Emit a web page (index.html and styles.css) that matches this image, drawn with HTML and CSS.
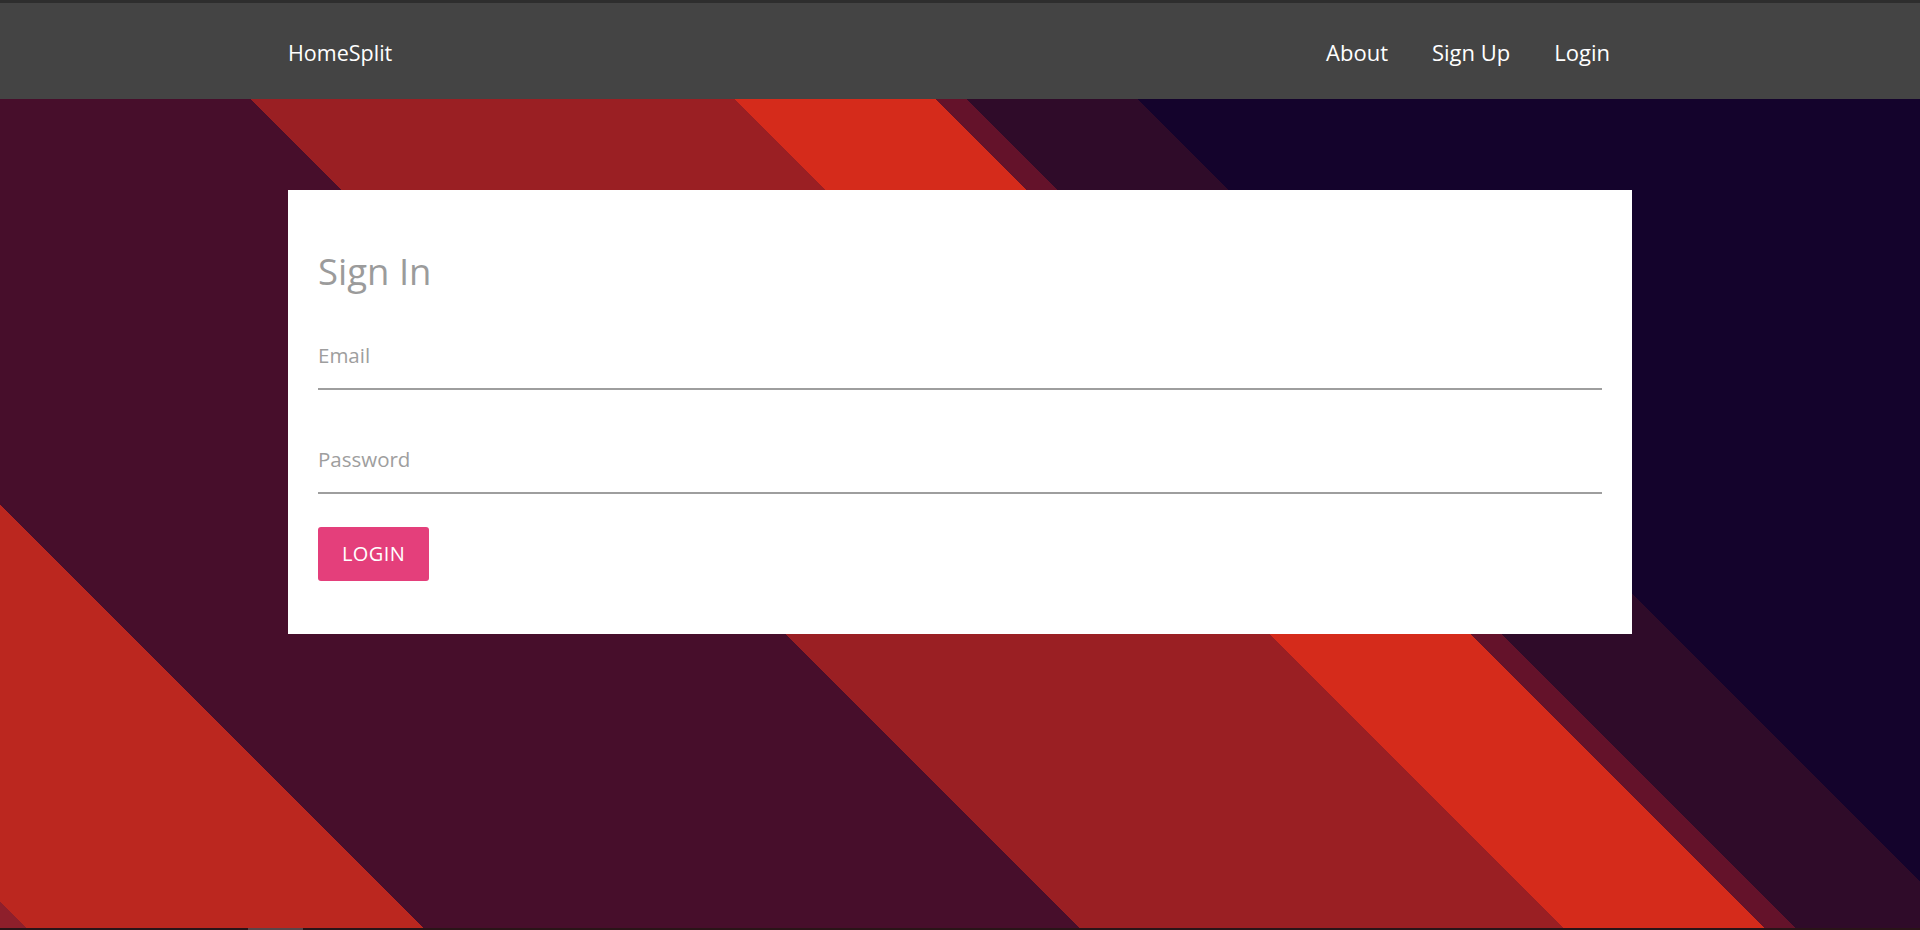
FILE: index.html
```html
<!DOCTYPE html>
<html lang="en">
<head>
<meta charset="utf-8">
<title>HomeSplit - Sign In</title>
<link rel="stylesheet" href="styles.css">
</head>
<body>
  <div class="top-strip"></div>
  <nav class="navbar">
    <div class="container nav-inner">
      <a class="brand" href="#">HomeSplit</a>
      <ul class="nav-links">
        <li><a href="#">About</a></li>
        <li><a href="#">Sign Up</a></li>
        <li><a href="#">Login</a></li>
      </ul>
    </div>
  </nav>
  <main class="page">
    <div class="container">
      <form class="card">
        <h5 class="card-title">Sign In</h5>
        <input class="field" type="email" placeholder="Email">
        <input class="field field-gap" type="password" placeholder="Password">
        <button class="btn" type="button">LOGIN</button>
      </form>
    </div>
  </main>
  <div class="bottom-bar"><span class="bottom-thumb"></span></div>
</body>
</html>
```
FILE: styles.css
```css
* { box-sizing: border-box; }

html, body {
  margin: 0;
  padding: 0;
}

body {
  height: 930px;
  overflow: hidden;
  display: flex;
  flex-direction: column;
  font-family: "Open Sans", "Noto Sans", sans-serif;
  background: linear-gradient(45deg,
    #8e1f2b 0 20px,
    #bb271f 20px 301px,
    #470e2b 301px 765px,
    #9a1f23 765px 1107px,
    #d52b1b 1107px 1249px,
    #64122a 1249px 1271px,
    #2f0b29 1271px 1392px,
    #14032c 1392px);
}

.container {
  width: 1344px;
  margin: 0 auto;
}

.top-strip {
  height: 3px;
  background: #2e2e2e;
  flex: none;
}

.navbar {
  height: 96px;
  background: #444444;
  flex: none;
}

.nav-inner {
  height: 100%;
  padding-top: 2px;
  display: flex;
  align-items: center;
  justify-content: space-between;
}

.brand {
  color: #ffffff;
  text-decoration: none;
  font-size: 21.5px;
}

.nav-links {
  list-style: none;
  margin: 0;
  padding: 0;
  display: flex;
}

.nav-links a {
  display: block;
  padding: 0 22px;
  color: #ffffff;
  text-decoration: none;
  font-size: 22px;
}

.page {
  flex: 1;
  padding-top: 91px;
}

.card {
  background: #ffffff;
  padding: 30px 30px 53px;
  display: flex;
  flex-direction: column;
  align-items: flex-start;
}

.card-title {
  margin: 29px 0 29px;
  font-size: 36.5px;
  line-height: 44px;
  font-weight: 400;
  color: #9b9b9b;
}

.field {
  width: 100%;
  height: 68px;
  border: none;
  border-bottom: 2px solid #9e9e9e;
  padding: 0;
  margin: 0;
  font-family: inherit;
  font-size: 20.5px;
  color: #555;
  background: transparent;
  outline: none;
}

.field::placeholder {
  color: #9e9e9e;
}

.field-gap {
  margin-top: 36px;
}

.btn {
  margin-top: 33px;
  height: 54px;
  padding: 0 24px;
  border: none;
  border-radius: 3px;
  background: #e43f7b;
  color: #ffffff;
  font-family: inherit;
  font-size: 20px;
  letter-spacing: 0.4px;
  line-height: 54px;
  cursor: pointer;
}

.bottom-bar {
  height: 2px;
  flex: none;
  background: #2a1418;
  padding-left: 248px;
}

.bottom-thumb {
  display: block;
  width: 55px;
  height: 2px;
  background: #5a4548;
}
```
